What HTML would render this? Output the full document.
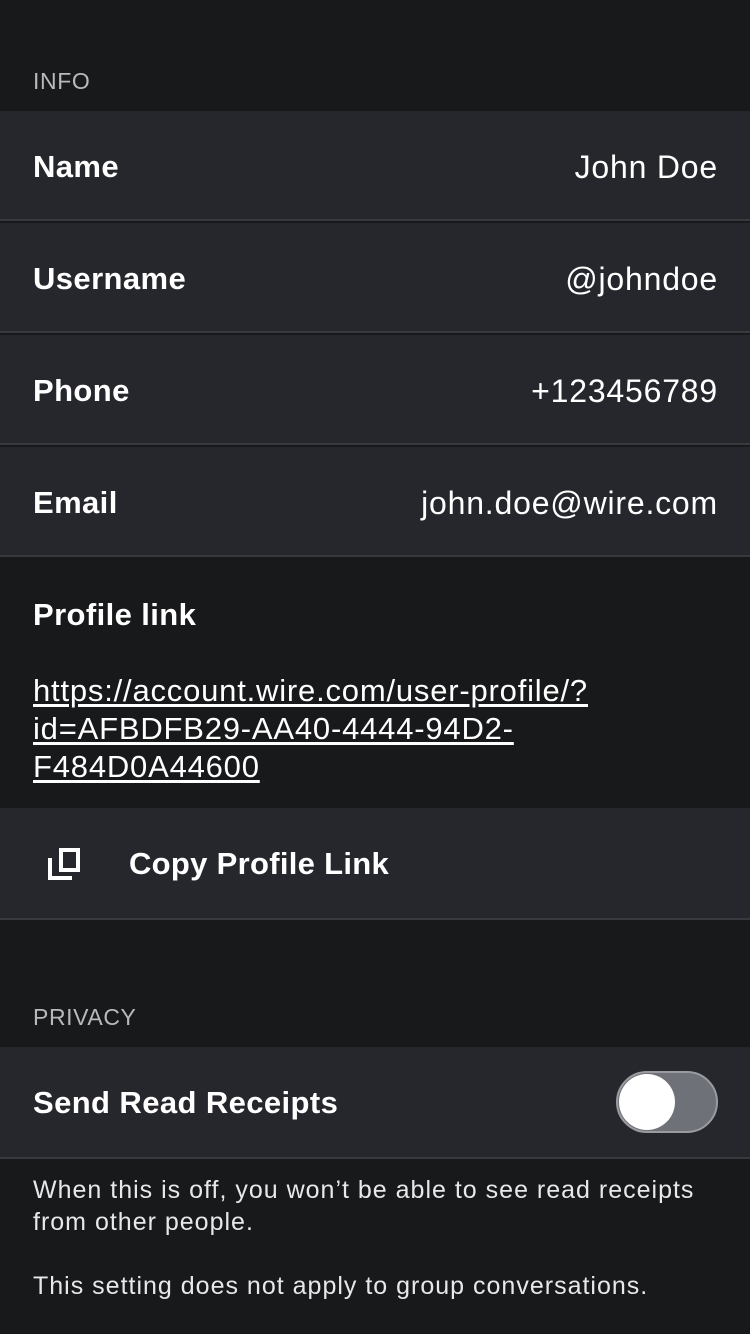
<!DOCTYPE html>
<html><head><meta charset="utf-8"><style>
*{margin:0;padding:0;box-sizing:border-box}
body{width:750px;height:1334px;background:#18191b;font-family:"Liberation Sans",sans-serif;color:#fff;position:relative;overflow:hidden}
.abs{position:absolute}
.hdr{left:33px;font-size:23px;color:#b8b9bd;letter-spacing:.6px}
.row{position:absolute;left:0;width:750px;height:110px;background:#26272c;border-bottom:2px solid #38393e}
.lab{position:absolute;left:33px;top:1px;line-height:110px;font-size:31px;font-weight:bold;letter-spacing:.4px}
.val{position:absolute;right:32px;top:1px;line-height:110px;font-size:32px;letter-spacing:.8px}
.foot{left:33px;font-size:25px;color:#e8e8ea;line-height:32px;letter-spacing:1px}
</style></head><body>
<div class="abs hdr" style="top:68px">INFO</div>
<div class="row" style="top:111px"><div class="lab">Name</div><div class="val">John Doe</div></div>
<div class="row" style="top:223px"><div class="lab">Username</div><div class="val">@johndoe</div></div>
<div class="row" style="top:335px"><div class="lab">Phone</div><div class="val">+123456789</div></div>
<div class="row" style="top:447px"><div class="lab">Email</div><div class="val">john.doe@wire.com</div></div>
<div class="abs" style="left:33px;top:597px;font-size:31px;font-weight:bold;letter-spacing:.4px">Profile link</div>
<div class="abs" style="left:33px;top:672px;font-size:31px;line-height:38px;letter-spacing:.8px;text-decoration:underline;text-underline-offset:3px">https://account.wire.com/user-profile/?<br>id=AFBDFB29-AA40-4444-94D2-<br>F484D0A44600</div>
<div class="row" style="top:808px;height:112px">
<svg class="abs" style="left:48px;top:40px" width="32" height="32" viewBox="0 0 32 32" fill="none" stroke="#fff" stroke-width="4"><path d="M2 10V30H24"/><rect x="13" y="2" width="17" height="20"/></svg>
<div class="lab" style="left:129px;letter-spacing:.3px">Copy Profile Link</div></div>
<div class="abs hdr" style="top:1004px">PRIVACY</div>
<div class="row" style="top:1047px;height:112px"><div class="lab">Send Read Receipts</div>
<div class="abs" style="left:616px;top:24px;width:102px;height:62px;border-radius:31px;background:#6f7178;border:2px solid #9a9ba0"></div>
<div class="abs" style="left:619px;top:27px;width:56px;height:56px;border-radius:28px;background:#fff"></div></div>
<div class="abs foot" style="top:1174px">When this is off, you won’t be able to see read receipts<br>from other people.</div>
<div class="abs foot" style="top:1270px">This setting does not apply to group conversations.</div>
</body></html>
